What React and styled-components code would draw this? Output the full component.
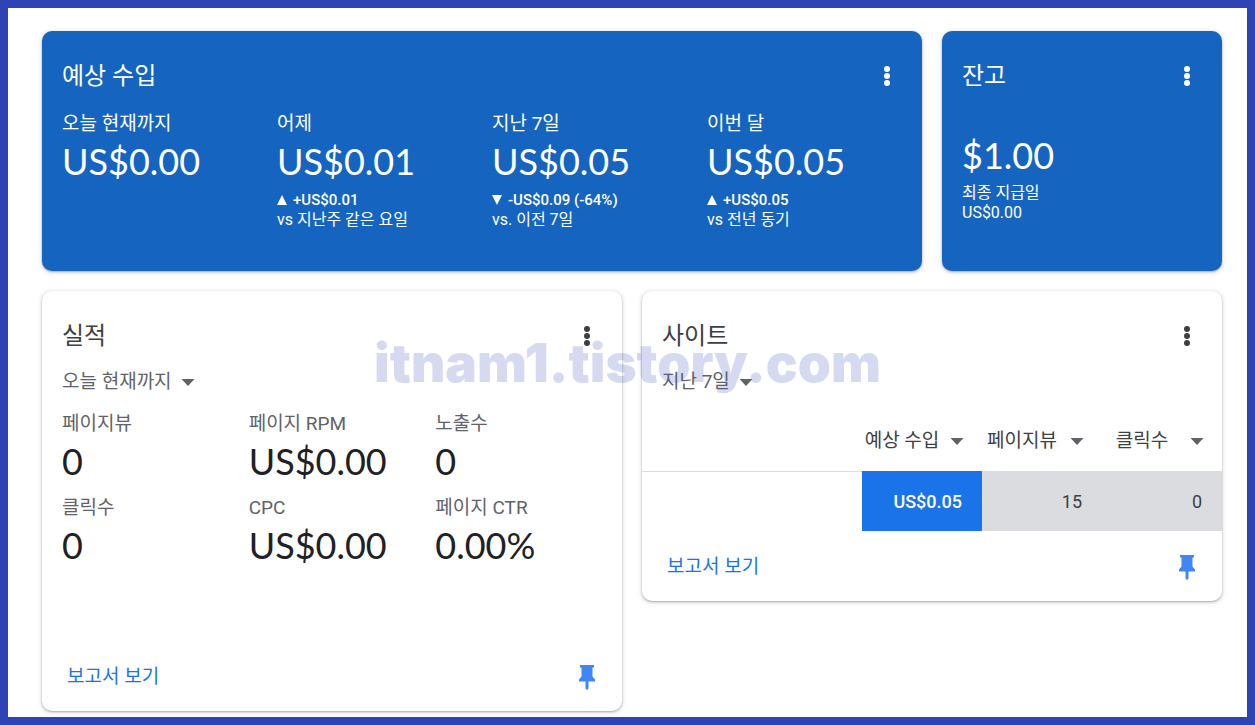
import React, { useState } from 'react';
import styled, { createGlobalStyle } from 'styled-components';

const GlobalStyle = createGlobalStyle`
  * {
    box-sizing: border-box;
  }
  body {
    margin: 0;
    background-color: #ffffff;
    font-family: Roboto, 'Noto Sans CJK KR', sans-serif;
    color: #3c4043;
  }
  h2, p, dl, dt, dd {
    margin: 0;
    font-weight: 400;
  }
  button, select {
    font: inherit;
    color: inherit;
  }
`;

const Page = styled.main`
  position: relative;
  min-height: 100vh;
  padding: 23px 25px 6px 34px;
  border: 8px solid #2e44b5;
`;
const Board = styled.div`
  display: grid;
  grid-template-columns: repeat(4, 1fr);
  align-items: start;
  gap: 20px;
`;
const Card = styled.section`
  grid-column: span ${(props) => props.$span};
  min-height: ${(props) => props.$height}px;
  display: flex;
  flex-direction: column;
  border-radius: 10px;
  background-color: ${(props) => (props.$blue ? '#1565c0' : '#ffffff')};
  color: ${(props) => (props.$blue ? '#ffffff' : '#3c4043')};
  box-shadow: 0 1px 2px rgba(60, 64, 67, 0.35), 0 1px 4px 1px rgba(60, 64, 67, 0.15);
`;
const CardHeader = styled.header`
  padding: 25px 20px 0;
  display: flex;
  justify-content: space-between;
  align-items: center;
`;
const Title = styled.h2`
  font-size: 24px;
  line-height: 40px;
`;
const IconButton = styled.button`
  width: 30px;
  height: 40px;
  padding: 0;
  border: 0;
  background: none;
  display: flex;
  justify-content: center;
  align-items: center;
  cursor: pointer;
`;
const Metrics = styled.dl`
  padding: 14px 0 0 20px;
  display: grid;
  grid-template-columns: repeat(${(props) => props.$columns}, 1fr);
  row-gap: 10px;
`;
const Label = styled.dt`
  font-size: 19px;
  line-height: 28px;
  color: ${(props) => (props.$blue ? '#ffffff' : '#5f6368')};
`;
const Value = styled.dd`
  font-family: Lato, sans-serif;
  font-size: 36px;
  line-height: 46px;
  color: ${(props) => (props.$blue ? '#ffffff' : '#202124')};
`;
const Delta = styled.dd`
  padding-top: 6px;
  display: flex;
  align-items: center;
  gap: 6px;
  font-size: 15px;
  font-weight: 500;
  line-height: 20px;
`;
const Note = styled.dd`
  font-size: 16px;
  line-height: 20px;
`;
const Balance = styled.div`
  padding: 37px 20px 0;
`;
const BalanceValue = styled.p`
  margin-bottom: 6px;
  font-family: Lato, sans-serif;
  font-size: 36px;
  line-height: 44px;
`;
const BalanceNote = styled.p`
  font-size: 16px;
  line-height: 20px;
`;
const PickerRow = styled.div`
  padding: 12px 20px 0;
  display: flex;
`;
const PickerLabel = styled.label`
  position: relative;
  display: block;
  svg {
    position: absolute;
    top: 11px;
    right: ${(props) => (props.$column ? 18 : 0)}px;
    pointer-events: none;
  }
`;
const Select = styled.select`
  appearance: none;
  width: ${(props) => (props.$column ? '100%' : 'auto')};
  field-sizing: content;
  height: 28px;
  padding: 0 ${(props) => (props.$column ? '40px 0 0' : '23px 0 0')};
  border: 0;
  background: none;
  font-size: 19px;
  font-weight: 400;
  line-height: 28px;
  text-align: ${(props) => (props.$column ? 'center' : 'left')};
  color: ${(props) => (props.$column ? '#3c4043' : '#5f6368')};
  cursor: pointer;
`;
const Table = styled.table`
  width: 100%;
  margin-top: 15px;
  border-collapse: collapse;
  table-layout: fixed;
  font-size: 18px;
`;
const HeadCell = styled.th`
  width: ${(props) => (props.$name ? 'auto' : '120px')};
  height: 60px;
  padding: 0;
  font-weight: 400;
`;
const Cell = styled.td`
  height: 60px;
  padding: 0 20px;
  text-align: right;
  font-weight: ${(props) => (props.$active ? 500 : 400)};
  color: ${(props) => (props.$active ? '#ffffff' : '#3c4043')};
  background-color: ${(props) => (props.$active ? '#1a73e8' : '#dadce0')};
`;
const NameCell = styled.td`
  height: 60px;
  box-shadow: inset 0 1px #dadce0;
`;
const CardFooter = styled.footer`
  height: 70px;
  margin-top: auto;
  padding: 2px 20px 0 25px;
  display: flex;
  justify-content: space-between;
  align-items: center;
`;
const ReportLink = styled.a`
  font-size: 19px;
  line-height: 28px;
  color: #1a73e8;
  text-decoration: none;
`;
const Watermark = styled.div`
  position: absolute;
  top: 325px;
  left: 0;
  width: 100%;
  text-align: center;
  font-family: Inter, sans-serif;
  font-size: 53px;
  font-weight: 900;
  line-height: 60px;
  color: rgba(46, 68, 181, 0.2);
  pointer-events: none;
`;

const periods = ['오늘 현재까지', '어제', '지난 7일', '이번 달'];
const columns = ['예상 수입', '페이지뷰', '클릭수'];

const earnings = [
  { label: '오늘 현재까지', value: 'US$0.00' },
  { label: '어제', value: 'US$0.01', delta: '+US$0.01', note: 'vs 지난주 같은 요일' },
  { label: '지난 7일', value: 'US$0.05', delta: '-US$0.09 (-64%)', down: true, note: 'vs. 이전 7일' },
  { label: '이번 달', value: 'US$0.05', delta: '+US$0.05', note: 'vs 전년 동기' },
];
const performance = [
  { label: '페이지뷰', value: '0' },
  { label: '페이지 RPM', value: 'US$0.00' },
  { label: '노출수', value: '0' },
  { label: '클릭수', value: '0' },
  { label: 'CPC', value: 'US$0.00' },
  { label: '페이지 CTR', value: '0.00%' },
];

const App = () => {
  return (
    <Page>
      <GlobalStyle />
      <Board>
        <Card $span={3} $height={240} $blue>
          <Header title="예상 수입" />
          <Metrics $columns={4}>
            {earnings.map((item) => (
              <div key={item.label}>
                <Label $blue>{item.label}</Label>
                <Value $blue>{item.value}</Value>
                {item.delta && (
                  <Delta>
                    <Trend down={item.down} />
                    {item.delta}
                  </Delta>
                )}
                {item.note && <Note>{item.note}</Note>}
              </div>
            ))}
          </Metrics>
        </Card>
        <Card $span={1} $height={240} $blue>
          <Header title="잔고" />
          <Balance>
            <BalanceValue>$1.00</BalanceValue>
            <BalanceNote>최종 지급일</BalanceNote>
            <BalanceNote>US$0.00</BalanceNote>
          </Balance>
        </Card>
        <Card $span={2} $height={420}>
          <Header title="실적" />
          <PickerRow>
            <Picker name="실적 기간" options={periods} initial="오늘 현재까지" />
          </PickerRow>
          <Metrics $columns={3}>
            {performance.map((item) => (
              <div key={item.label}>
                <Label>{item.label}</Label>
                <Value>{item.value}</Value>
              </div>
            ))}
          </Metrics>
          <Footer />
        </Card>
        <Card $span={2} $height={310}>
          <Header title="사이트" />
          <PickerRow>
            <Picker name="사이트 기간" options={periods} initial="지난 7일" />
          </PickerRow>
          <Table>
            <thead>
              <tr>
                <HeadCell $name />
                {columns.map((column) => (
                  <HeadCell key={column} scope="col">
                    <Picker name={column} options={columns} initial={column} column />
                  </HeadCell>
                ))}
              </tr>
            </thead>
            <tbody>
              <tr>
                <NameCell />
                <Cell $active>US$0.05</Cell>
                <Cell>15</Cell>
                <Cell>0</Cell>
              </tr>
            </tbody>
          </Table>
          <Footer />
        </Card>
      </Board>
      <Watermark>itnam1.tistory.com</Watermark>
    </Page>
  );
};

export default App;

const Header = ({ title }) => {
  return (
    <CardHeader>
      <Title>{title}</Title>
      <IconButton type="button" aria-label={title + ' 메뉴'}>
        <svg width="6" height="20" viewBox="0 0 6 20" fill="currentColor">
          <circle cx="3" cy="3" r="3" />
          <circle cx="3" cy="10" r="3" />
          <circle cx="3" cy="17" r="3" />
        </svg>
      </IconButton>
    </CardHeader>
  );
};
const Footer = () => {
  return (
    <CardFooter>
      <ReportLink href="#report">보고서 보기</ReportLink>
      <IconButton type="button" aria-label="고정">
        <svg width="16" height="25" viewBox="0 0 16 25" fill="#4285f4">
          <path d="M1 0H15V2.5H13.5V11.5L16 14.5V16.5H9.5V23.5L8 25L6.5 23.5V16.5H0V14.5L2.5 11.5V2.5H1Z" />
        </svg>
      </IconButton>
    </CardFooter>
  );
};
const Picker = ({ name, options, initial, column }) => {
  const [value, setValue] = useState(initial);
  return (
    <PickerLabel $column={column}>
      <Select $column={column} aria-label={name} value={value} onChange={(e) => setValue(e.target.value)}>
        {options.map((option) => (
          <option key={option}>{option}</option>
        ))}
      </Select>
      <svg width="14" height="7" viewBox="0 0 14 7" fill="#5f6368">
        <path d="M0.5 0H13.5L7 7Z" />
      </svg>
    </PickerLabel>
  );
};
const Trend = ({ down }) => {
  return (
    <svg width="10" height="10" viewBox="0 0 10 10" fill="currentColor">
      <path d={down ? 'M0 0H10L5 10Z' : 'M0 10H10L5 0Z'} />
    </svg>
  );
};
